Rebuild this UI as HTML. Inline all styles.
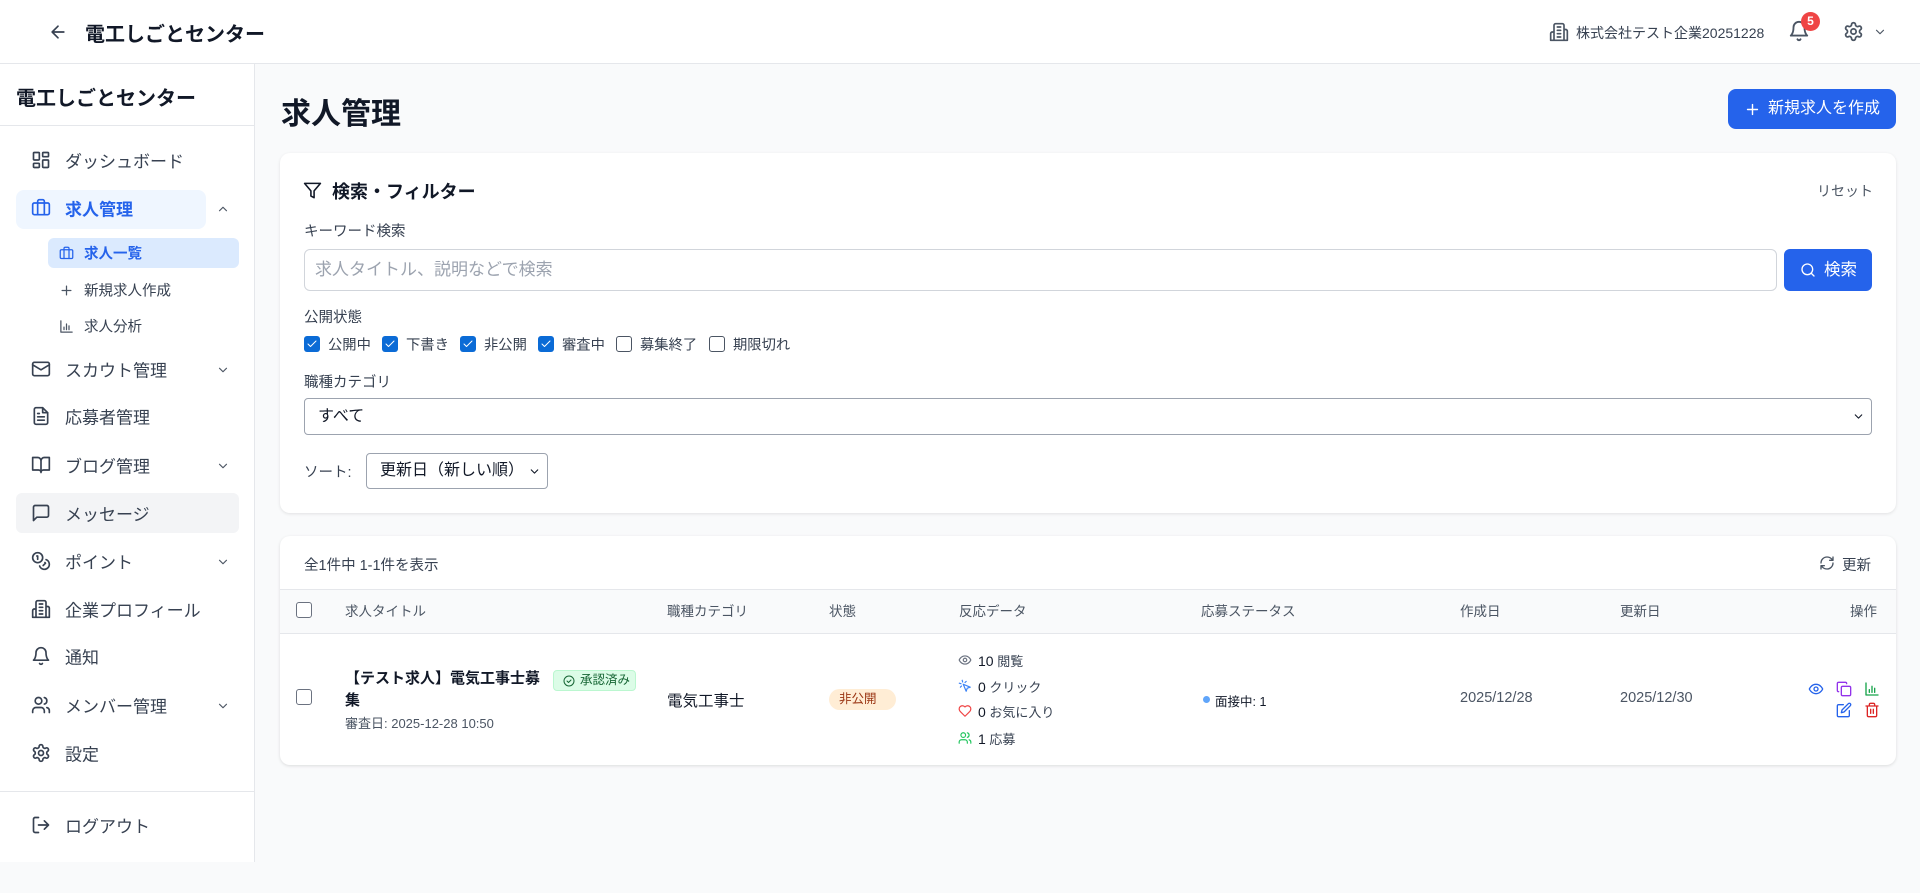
<!DOCTYPE html>
<html><head><meta charset="utf-8"><style>
*{box-sizing:border-box;margin:0;padding:0}
body{width:1920px;height:893px;overflow:hidden;background:#f9fafb;font-family:"Liberation Sans","Noto Sans CJK JP",sans-serif;color:#111827;position:relative}
.a{position:absolute;white-space:nowrap}
svg{display:block}
.ic{position:absolute;fill:none;stroke:currentColor;stroke-width:2;stroke-linecap:round;stroke-linejoin:round}
.nav{position:absolute;left:65px;font-size:17px;color:#374151;transform:translateY(-50%)}
.sub{position:absolute;left:84px;font-size:14.5px;color:#374151;transform:translateY(-50%)}
.cb{position:absolute;width:16px;height:16px;border-radius:3px}
.on{background:#0b6bd6;}
.off{border:1.5px solid #4b5563;background:#fff}
.cbl{position:absolute;font-size:14.3px;color:#374151;transform:translateY(-50%)}
.th{position:absolute;top:610px;transform:translateY(-50%);font-size:13.5px;color:#4b5563}
</style></head><body>
<!-- header -->
<div class="a" style="left:0;top:0;width:1920px;height:64px;background:#fff;border-bottom:1px solid #e5e7eb"></div>
<svg class="ic" style="left:48px;top:22px;color:#374151" width="20" height="20" viewBox="0 0 24 24"><path d="M19 12H5M12 19l-7-7 7-7"/></svg>
<div class="a" style="left:85px;top:18px;font-size:20px;font-weight:bold">電工しごとセンター</div>
<svg class="ic" style="left:1549px;top:22px;color:#4b5563" width="20" height="20" viewBox="0 0 24 24"><path d="M6 22V4a2 2 0 0 1 2-2h8a2 2 0 0 1 2 2v18zM6 12H4a2 2 0 0 0-2 2v8h4M18 9h2a2 2 0 0 1 2 2v11h-4M10 6h4M10 10h4M10 14h4M10 18h4"/></svg>
<div class="a" style="left:1576px;top:23px;font-size:14px;color:#374151">株式会社テスト企業20251228</div>
<svg class="ic" style="left:1788px;top:20px;color:#4b5563" width="22" height="22" viewBox="0 0 24 24"><path d="M6 8a6 6 0 0 1 12 0c0 7 3 9 3 9H3s3-2 3-9M10.3 21a1.94 1.94 0 0 0 3.4 0"/></svg>
<div class="a" style="left:1801px;top:12px;width:19px;height:19px;border-radius:50%;background:#ef4444;color:#fff;font-size:12px;font-weight:bold;text-align:center;line-height:19px">5</div>
<svg class="ic" style="left:1843px;top:21px;color:#4b5563" width="21" height="21" viewBox="0 0 24 24"><path d="M12.22 2h-.44a2 2 0 0 0-2 2v.18a2 2 0 0 1-1 1.73l-.43.25a2 2 0 0 1-2 0l-.15-.08a2 2 0 0 0-2.730.73l-.22.38a2 2 0 0 0 .73 2.73l.15.1a2 2 0 0 1 1 1.72v.51a2 2 0 0 1-1 1.740l-.15.09a2 2 0 0 0-.73 2.73l.22.38a2 2 0 0 0 2.73.73l.15-.08a2 2 0 0 1 2 0l.43.25a2 2 0 0 1 1 1.73V20a2 2 0 0 0 2 2h.44a2 2 0 0 0 2-2v-.18a2 2 0 0 1 1-1.73l.43-.25a2 2 0 0 1 2 0l.15.08a2 2 0 0 0 2.73-.73l.22-.39a2 2 0 0 0-.73-2.73l-.15-.08a2 2 0 0 1-1-1.74v-.5a2 2 0 0 1 1-1.74l.15-.09a2 2 0 0 0 .73-2.73l-.22-.38a2 2 0 0 0-2.73-.73l-.15.08a2 2 0 0 1-2 0l-.43-.25a2 2 0 0 1-1-1.73V4a2 2 0 0 0-2-2z"/><circle cx="12" cy="12" r="3"/></svg>
<svg class="ic" style="left:1873px;top:25px;color:#4b5563" width="14" height="14" viewBox="0 0 24 24"><path d="M6 9l6 6 6-6"/></svg>

<!-- sidebar -->
<div class="a" style="left:0;top:64px;width:255px;height:798px;background:#fff;border-right:1px solid #e5e7eb"></div>
<div class="a" style="left:16px;top:82px;font-size:20px;font-weight:bold">電工しごとセンター</div>
<div class="a" style="left:0;top:125px;width:255px;height:1px;background:#e5e7eb"></div>
<div class="a" style="left:16px;top:190px;width:190px;height:39px;border-radius:8px;background:#eff6ff"></div>
<div class="a" style="left:48px;top:238px;width:191px;height:30px;border-radius:6px;background:#dbeafe"></div>
<div class="a" style="left:16px;top:493px;width:223px;height:40px;border-radius:6px;background:#f3f4f6"></div>
<div class="a" style="left:0;top:791px;width:255px;height:1px;background:#e5e7eb"></div>

<svg class="ic" style="left:31px;top:150px;color:#374151" width="20" height="20" viewBox="0 0 24 24"><rect x="3" y="3" width="7" height="9" rx="1"/><rect x="14" y="3" width="7" height="5" rx="1"/><rect x="14" y="12" width="7" height="9" rx="1"/><rect x="3" y="16" width="7" height="5" rx="1"/></svg>
<div class="nav" style="top:160px">ダッシュボード</div>
<svg class="ic" style="left:31px;top:198px;color:#2563eb" width="20" height="20" viewBox="0 0 24 24"><path d="M16 20V4a2 2 0 0 0-2-2h-4a2 2 0 0 0-2 2v16"/><rect x="2" y="6" width="20" height="14" rx="2"/></svg>
<div class="nav" style="top:208px;color:#2563eb;font-weight:bold">求人管理</div>
<svg class="ic" style="left:216px;top:202px;color:#4b5563" width="14" height="14" viewBox="0 0 24 24"><path d="M18 15l-6-6-6 6"/></svg>
<svg class="ic" style="left:59px;top:246px;color:#2563eb" width="15" height="15" viewBox="0 0 24 24"><path d="M16 20V4a2 2 0 0 0-2-2h-4a2 2 0 0 0-2 2v16"/><rect x="2" y="6" width="20" height="14" rx="2"/></svg>
<div class="sub" style="top:253px;color:#2563eb;font-weight:bold">求人一覧</div>
<svg class="ic" style="left:59px;top:283px;color:#4b5563" width="15" height="15" viewBox="0 0 24 24"><path d="M12 5v14M5 12h14"/></svg>
<div class="sub" style="top:290px">新規求人作成</div>
<svg class="ic" style="left:59px;top:319px;color:#4b5563" width="15" height="15" viewBox="0 0 24 24"><path d="M3 3v18h18M8 17v-4M12 17V8M16 17v-6"/></svg>
<div class="sub" style="top:326px">求人分析</div>
<svg class="ic" style="left:31px;top:359px;color:#374151" width="20" height="20" viewBox="0 0 24 24"><rect x="2" y="4" width="20" height="16" rx="2"/><path d="M22 7l-10 6L2 7"/></svg>
<div class="nav" style="top:369px">スカウト管理</div>
<svg class="ic" style="left:216px;top:363px;color:#4b5563" width="14" height="14" viewBox="0 0 24 24"><path d="M6 9l6 6 6-6"/></svg>
<svg class="ic" style="left:31px;top:406px;color:#374151" width="20" height="20" viewBox="0 0 24 24"><path d="M14 2H6a2 2 0 0 0-2 2v16a2 2 0 0 0 2 2h12a2 2 0 0 0 2-2V8z"/><path d="M14 2v6h6M16 13H8M16 17H8M10 9H8"/></svg>
<div class="nav" style="top:416px">応募者管理</div>
<svg class="ic" style="left:31px;top:455px;color:#374151" width="20" height="20" viewBox="0 0 24 24"><path d="M2 3h6a4 4 0 0 1 4 4v14a3 3 0 0 0-3-3H2zM22 3h-6a4 4 0 0 0-4 4v14a3 3 0 0 1 3-3h7z"/></svg>
<div class="nav" style="top:465px">ブログ管理</div>
<svg class="ic" style="left:216px;top:459px;color:#4b5563" width="14" height="14" viewBox="0 0 24 24"><path d="M6 9l6 6 6-6"/></svg>
<svg class="ic" style="left:31px;top:503px;color:#374151" width="20" height="20" viewBox="0 0 24 24"><path d="M21 15a2 2 0 0 1-2 2H7l-4 4V5a2 2 0 0 1 2-2h14a2 2 0 0 1 2 2z"/></svg>
<div class="nav" style="top:513px">メッセージ</div>
<svg class="ic" style="left:31px;top:551px;color:#374151" width="20" height="20" viewBox="0 0 24 24"><circle cx="8" cy="8" r="6"/><path d="M18.09 10.37A6 6 0 1 1 10.34 18M7 6h1v4M16.71 13.88l.7.71-2.82 2.82"/></svg>
<div class="nav" style="top:561px">ポイント</div>
<svg class="ic" style="left:216px;top:555px;color:#4b5563" width="14" height="14" viewBox="0 0 24 24"><path d="M6 9l6 6 6-6"/></svg>
<svg class="ic" style="left:31px;top:599px;color:#374151" width="20" height="20" viewBox="0 0 24 24"><path d="M6 22V4a2 2 0 0 1 2-2h8a2 2 0 0 1 2 2v18zM6 12H4a2 2 0 0 0-2 2v8h4M18 9h2a2 2 0 0 1 2 2v11h-4M10 6h4M10 10h4M10 14h4M10 18h4"/></svg>
<div class="nav" style="top:609px">企業プロフィール</div>
<svg class="ic" style="left:31px;top:646px;color:#374151" width="20" height="20" viewBox="0 0 24 24"><path d="M6 8a6 6 0 0 1 12 0c0 7 3 9 3 9H3s3-2 3-9M10.3 21a1.94 1.94 0 0 0 3.4 0"/></svg>
<div class="nav" style="top:656px">通知</div>
<svg class="ic" style="left:31px;top:695px;color:#374151" width="20" height="20" viewBox="0 0 24 24"><path d="M16 21v-2a4 4 0 0 0-4-4H6a4 4 0 0 0-4 4v2"/><circle cx="9" cy="7" r="4"/><path d="M22 21v-2a4 4 0 0 0-3-3.870M16 3.13a4 4 0 0 1 0 7.75"/></svg>
<div class="nav" style="top:705px">メンバー管理</div>
<svg class="ic" style="left:216px;top:699px;color:#4b5563" width="14" height="14" viewBox="0 0 24 24"><path d="M6 9l6 6 6-6"/></svg>
<svg class="ic" style="left:31px;top:743px;color:#374151" width="20" height="20" viewBox="0 0 24 24"><path d="M12.22 2h-.44a2 2 0 0 0-2 2v.18a2 2 0 0 1-1 1.73l-.43.25a2 2 0 0 1-2 0l-.15-.08a2 2 0 0 0-2.73.73l-.22.38a2 2 0 0 0 .73 2.73l.15.1a2 2 0 0 1 1 1.72v.51a2 2 0 0 1-1 1.74l-.15.09a2 2 0 0 0-.73 2.73l.22.38a2 2 0 0 0 2.73.73l.15-.08a2 2 0 0 1 2 0l.43.25a2 2 0 0 1 1 1.73V20a2 2 0 0 0 2 2h.44a2 2 0 0 0 2-2v-.18a2 2 0 0 1 1-1.73l.43-.25a2 2 0 0 1 2 0l.15.08a2 2 0 0 0 2.73-.73l.22-.39a2 2 0 0 0-.73-2.73l-.15-.08a2 2 0 0 1-1-1.74v-.5a2 2 0 0 1 1-1.74l.15-.09a2 2 0 0 0 .73-2.73l-.22-.38a2 2 0 0 0-2.73-.73l-.15.08a2 2 0 0 1-2 0l-.43-.25a2 2 0 0 1-1-1.73V4a2 2 0 0 0-2-2z"/><circle cx="12" cy="12" r="3"/></svg>
<div class="nav" style="top:753px">設定</div>
<svg class="ic" style="left:31px;top:815px;color:#374151" width="20" height="20" viewBox="0 0 24 24"><path d="M9 21H5a2 2 0 0 1-2-2V5a2 2 0 0 1 2-2h4M16 17l5-5-5-5M21 12H9"/></svg>
<div class="nav" style="top:825px">ログアウト</div>

<!-- main -->
<div class="a" style="left:281px;top:89px;font-size:30px;font-weight:bold">求人管理</div>
<div class="a" style="left:1728px;top:89px;width:168px;height:40px;border-radius:8px;background:#2563eb;color:#fff;font-size:16px;line-height:40px;padding-left:40px">新規求人を作成</div>
<svg class="ic" style="left:1744px;top:101px;color:#fff" width="17" height="17" viewBox="0 0 24 24"><path d="M12 5v14M5 12h14"/></svg>

<div class="a" style="left:280px;top:153px;width:1616px;height:360px;background:#fff;border-radius:10px;box-shadow:0 1px 3px rgba(0,0,0,.1)"></div>
<svg class="ic" style="left:303px;top:181px;color:#111827" width="19" height="19" viewBox="0 0 24 24"><path d="M22 3H2l8 9.46V19l4 2v-8.54z"/></svg>
<div class="a" style="left:332px;top:178px;font-size:18px;font-weight:bold">検索・フィルター</div>
<div class="a" style="left:1817px;top:181px;font-size:14px;color:#4b5563">リセット</div>
<div class="a" style="left:304px;top:220px;font-size:14.5px;color:#374151">キーワード検索</div>
<div class="a" style="left:304px;top:249px;width:1473px;height:42px;border:1px solid #d1d5db;border-radius:6px;background:#fff;font-size:17px;color:#9ca3af;line-height:40px;padding-left:10px">求人タイトル、説明などで検索</div>
<div class="a" style="left:1784px;top:249px;width:88px;height:42px;border-radius:6px;background:#2563eb;color:#fff;font-size:16.5px;line-height:42px;padding-left:40px">検索</div>
<svg class="ic" style="left:1800px;top:262px;color:#fff" width="16" height="16" viewBox="0 0 24 24"><circle cx="11" cy="11" r="8"/><path d="M21 21l-4.3-4.3"/></svg>
<div class="a" style="left:304px;top:306px;font-size:14.5px;color:#374151">公開状態</div>
<div class="cb on" style="left:304px;top:336px"></div><svg class="ic" style="left:306px;top:338px;color:#fff" width="12" height="12" viewBox="0 0 24 24" stroke-width="4"><path d="M20 6L9 17l-5-5"/></svg><div class="cbl" style="left:328px;top:344px">公開中</div>
<div class="cb on" style="left:382px;top:336px"></div><svg class="ic" style="left:384px;top:338px;color:#fff" width="12" height="12" viewBox="0 0 24 24" stroke-width="4"><path d="M20 6L9 17l-5-5"/></svg><div class="cbl" style="left:406px;top:344px">下書き</div>
<div class="cb on" style="left:460px;top:336px"></div><svg class="ic" style="left:462px;top:338px;color:#fff" width="12" height="12" viewBox="0 0 24 24" stroke-width="4"><path d="M20 6L9 17l-5-5"/></svg><div class="cbl" style="left:484px;top:344px">非公開</div>
<div class="cb on" style="left:538px;top:336px"></div><svg class="ic" style="left:540px;top:338px;color:#fff" width="12" height="12" viewBox="0 0 24 24" stroke-width="4"><path d="M20 6L9 17l-5-5"/></svg><div class="cbl" style="left:562px;top:344px">審査中</div>
<div class="cb off" style="left:616px;top:336px"></div><div class="cbl" style="left:640px;top:344px">募集終了</div>
<div class="cb off" style="left:709px;top:336px"></div><div class="cbl" style="left:733px;top:344px">期限切れ</div>
<div class="a" style="left:304px;top:371px;font-size:14.5px;color:#374151">職種カテゴリ</div>
<div class="a" style="left:304px;top:398px;width:1568px;height:37px;border:1px solid #9ca3af;border-radius:4px;background:#fff;font-size:16px;line-height:35px;padding-left:13px">すべて</div>
<svg class="ic" style="left:1852px;top:410px;color:#111827" width="13" height="13" viewBox="0 0 24 24" stroke-width="3"><path d="M6 9l6 6 6-6"/></svg>
<div class="a" style="left:304px;top:461px;font-size:14.5px;color:#374151">ソート:</div>
<div class="a" style="left:366px;top:453px;width:182px;height:36px;border:1px solid #9ca3af;border-radius:4px;background:#fff;font-size:16px;line-height:34px;padding-left:13px">更新日（新しい順）</div>
<svg class="ic" style="left:528px;top:465px;color:#111827" width="13" height="13" viewBox="0 0 24 24" stroke-width="3"><path d="M6 9l6 6 6-6"/></svg>

<!-- table card -->
<div class="a" style="left:280px;top:536px;width:1616px;height:229px;background:#fff;border-radius:10px;box-shadow:0 1px 3px rgba(0,0,0,.12);overflow:hidden">
<div style="position:absolute;left:0;top:53px;width:100%;height:45px;background:#f9fafb;border-top:1px solid #e5e7eb;border-bottom:1px solid #e5e7eb"></div>
</div>
<div class="a" style="left:304px;top:554px;font-size:14.5px;color:#374151">全1件中 1-1件を表示</div>
<svg class="ic" style="left:1819px;top:555px;color:#4b5563" width="16" height="16" viewBox="0 0 24 24"><path d="M3 12a9 9 0 0 1 9-9 9.75 9.75 0 0 1 6.74 2.74L21 8M21 3v5h-5M21 12a9 9 0 0 1-9 9 9.75 9.75 0 0 1-6.74-2.74L3 16M8 16H3v5"/></svg>
<div class="a" style="left:1842px;top:554px;font-size:14.5px;color:#374151">更新</div>
<div class="cb off" style="left:296px;top:602px;border-color:#6b7280"></div>
<div class="th" style="left:345px">求人タイトル</div>
<div class="th" style="left:667px">職種カテゴリ</div>
<div class="th" style="left:829px">状態</div>
<div class="th" style="left:959px">反応データ</div>
<div class="th" style="left:1201px">応募ステータス</div>
<div class="th" style="left:1460px">作成日</div>
<div class="th" style="left:1620px">更新日</div>
<div class="th" style="left:1850px">操作</div>

<div class="cb off" style="left:296px;top:689px;border-color:#6b7280"></div>
<div class="a" style="left:345px;top:668px;font-size:15px;font-weight:bold;line-height:22px">【テスト求人】電気工事士募<br>集</div>
<div class="a" style="left:345px;top:713px;font-size:13px;color:#4b5563">審査日: 2025-12-28 10:50</div>
<div class="a" style="left:553px;top:670px;width:83px;height:21px;border:1px solid #bbf7d0;background:#dcfce7;border-radius:4px;color:#166534;font-size:12.5px;line-height:19px;padding-left:26px">承認済み</div>
<svg class="ic" style="left:563px;top:675px;color:#166534" width="12" height="12" viewBox="0 0 24 24"><circle cx="12" cy="12" r="10"/><path d="M8 12l3 3 5-5"/></svg>
<div class="a" style="left:667px;top:689px;font-size:15.5px">電気工事士</div>
<div class="a" style="left:829px;top:689px;width:67px;height:21px;border-radius:11px;background:#ffedd5;color:#9a3412;font-size:12.5px;line-height:21px;padding-left:10px">非公開</div>

<svg class="ic" style="left:958px;top:653px;color:#6b7280" width="14" height="14" viewBox="0 0 24 24"><path d="M2 12s3-7 10-7 10 7 10 7-3 7-10 7-10-7-10-7z"/><circle cx="12" cy="12" r="3"/></svg>
<div class="a" style="left:978px;top:651px;font-size:13px;color:#374151"><span style="font-size:14px;color:#111827">10</span> 閲覧</div>
<svg class="ic" style="left:958px;top:679px;color:#3b82f6" width="14" height="14" viewBox="0 0 24 24"><path d="M9 9l5 12 1.8-5.2L21 14zM7.2 2.2L8 5.1M5.1 8l-2.9-.8M14 4.1L12 6M6 12l-1.9 2"/></svg>
<div class="a" style="left:978px;top:677px;font-size:13px;color:#374151"><span style="font-size:14px;color:#111827">0</span> クリック</div>
<svg class="ic" style="left:958px;top:704px;color:#ef4444" width="14" height="14" viewBox="0 0 24 24"><path d="M19 14c1.49-1.460 3-3.21 3-5.5A5.5 5.5 0 0 0 16.5 3c-1.76 0-3 .5-4.5 2-1.5-1.5-2.74-2-4.5-2A5.5 5.5 0 0 0 2 8.5c0 2.3 1.5 4.05 3 5.5l7 7z"/></svg>
<div class="a" style="left:978px;top:702px;font-size:13px;color:#374151"><span style="font-size:14px;color:#111827">0</span> お気に入り</div>
<svg class="ic" style="left:958px;top:731px;color:#22c55e" width="14" height="14" viewBox="0 0 24 24"><path d="M16 21v-2a4 4 0 0 0-4-4H6a4 4 0 0 0-4 4v2"/><circle cx="9" cy="7" r="4"/><path d="M22 21v-2a4 4 0 0 0-3-3.87M16 3.13a4 4 0 0 1 0 7.75"/></svg>
<div class="a" style="left:978px;top:729px;font-size:13px;color:#374151"><span style="font-size:14px;color:#111827">1</span> 応募</div>

<div class="a" style="left:1203px;top:696px;width:7px;height:7px;border-radius:50%;background:#60a5fa"></div>
<div class="a" style="left:1215px;top:691px;font-size:12.5px">面接中: 1</div>
<div class="a" style="left:1460px;top:690px;font-size:14.5px;color:#4b5563">2025/12/28</div>
<div class="a" style="left:1620px;top:690px;font-size:14.5px;color:#4b5563">2025/12/30</div>
<svg class="ic" style="left:1808px;top:681px;color:#2563eb" width="16" height="16" viewBox="0 0 24 24"><path d="M2 12s3-7 10-7 10 7 10 7-3 7-10 7-10-7-10-7z"/><circle cx="12" cy="12" r="3"/></svg>
<svg class="ic" style="left:1836px;top:681px;color:#9333ea" width="16" height="16" viewBox="0 0 24 24"><rect x="8" y="8" width="14" height="14" rx="2"/><path d="M4 16a2 2 0 0 1-2-2V4a2 2 0 0 1 2-2h10a2 2 0 0 1 2 2"/></svg>
<svg class="ic" style="left:1864px;top:681px;color:#16a34a" width="16" height="16" viewBox="0 0 24 24"><path d="M3 3v18h18M8 17v-4M12 17V8M16 17v-6"/></svg>
<svg class="ic" style="left:1836px;top:702px;color:#2563eb" width="16" height="16" viewBox="0 0 24 24"><path d="M11 4H4a2 2 0 0 0-2 2v14a2 2 0 0 0 2 2h14a2 2 0 0 0 2-2v-7"/><path d="M18.5 2.5a2.12 2.12 0 0 1 3 3L12 15l-4 1 1-4z"/></svg>
<svg class="ic" style="left:1864px;top:702px;color:#dc2626" width="16" height="16" viewBox="0 0 24 24"><path d="M3 6h18M19 6v14a2 2 0 0 1-2 2H7a2 2 0 0 1-2-2V6M8 6V4a2 2 0 0 1 2-2h4a2 2 0 0 1 2 2v2M10 11v6M14 11v6"/></svg>
</body></html>
